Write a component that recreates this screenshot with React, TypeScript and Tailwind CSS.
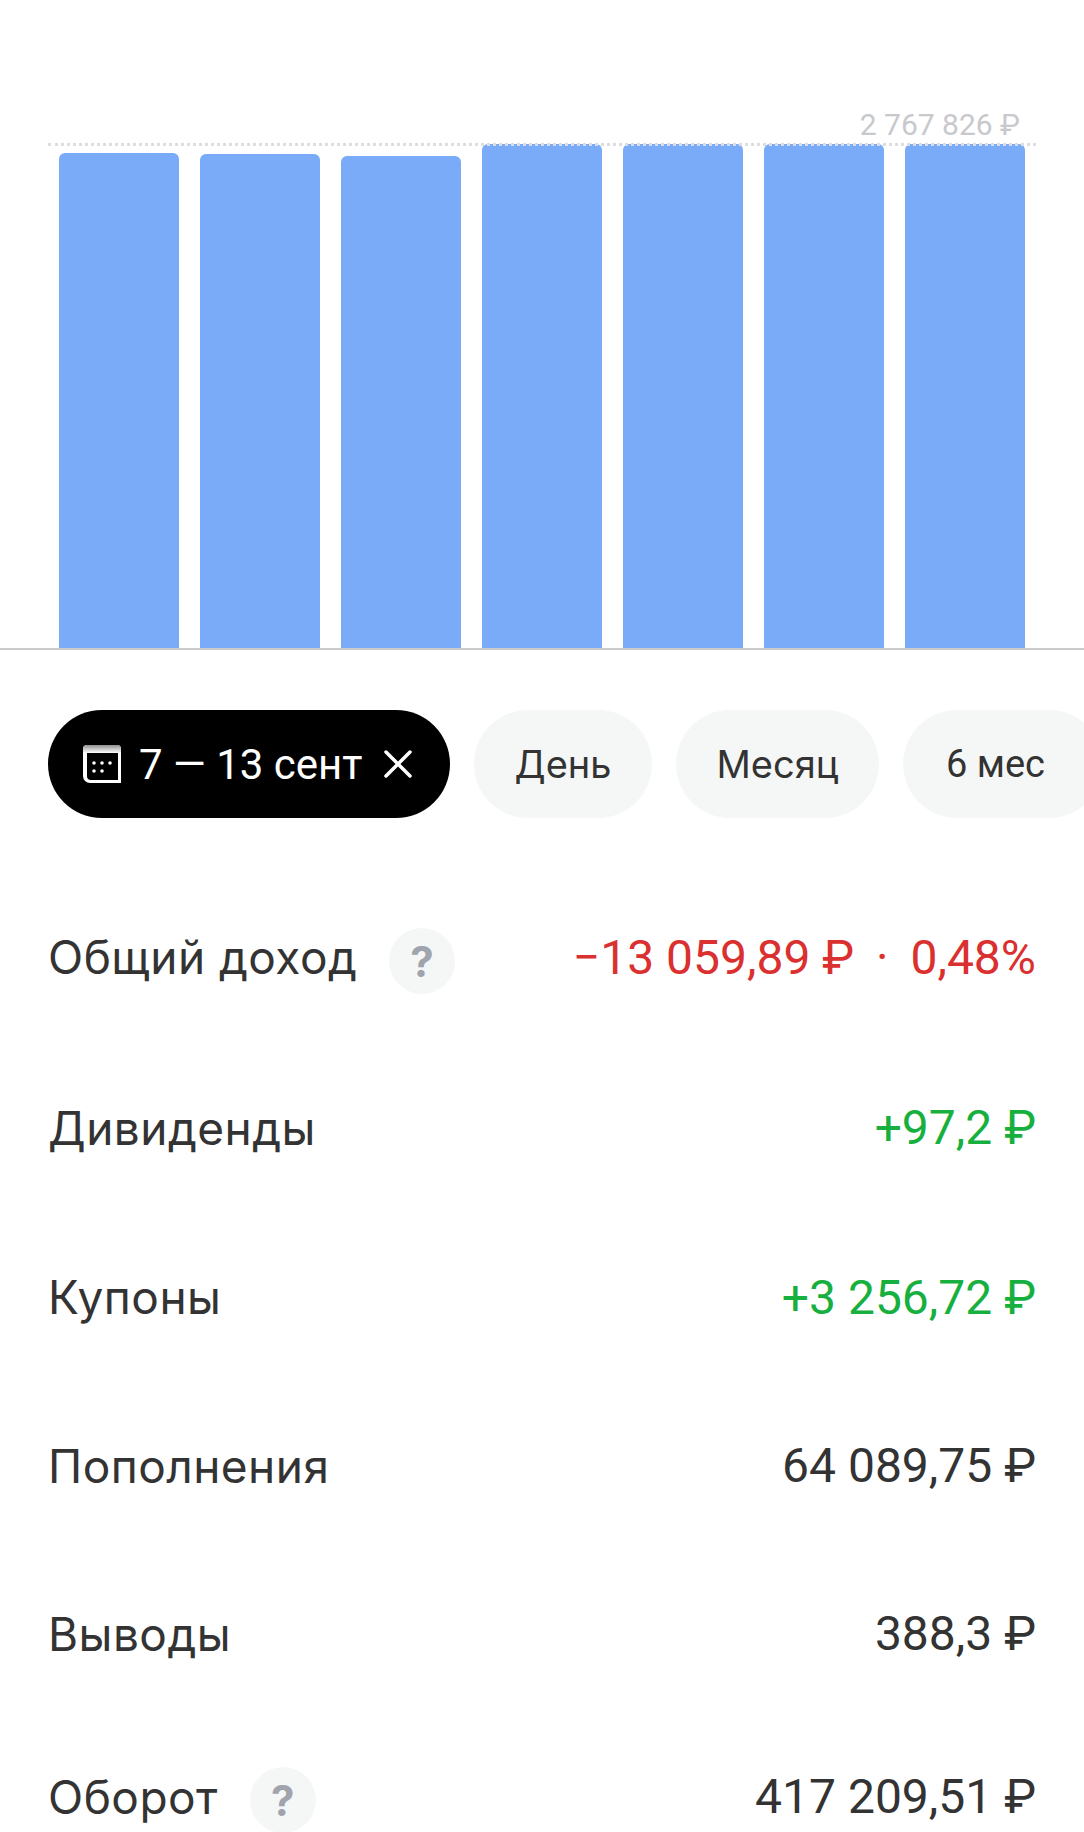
const bars = [495, 494, 492, 504, 504, 504, 504];

const rows = [
  { label: "Дивиденды", value: "+97,2 ₽", color: "text-[#17b03f]", h: "h-[170px]" },
  { label: "Купоны", value: "+3 256,72 ₽", color: "text-[#17b03f]", h: "h-[169px]" },
  { label: "Пополнения", value: "64 089,75 ₽", color: "text-[#333333]", h: "h-[168px]" },
  { label: "Выводы", value: "388,3 ₽", color: "text-[#333333]", h: "h-[168px]" },
];

const HelpBadge = () => (
  <span className="mt-[6px] flex h-[66px] w-[66px] shrink-0 items-center justify-center rounded-full bg-[#f5f7f7] text-[42px] font-bold text-[#a0a4ad]">
    ?
  </span>
);

const CalendarIcon = () => (
  <svg width="40" height="40" viewBox="0 0 40 40" fill="none">
    <defs>
      <linearGradient id="cal" x1="0" y1="0" x2="0" y2="1">
        <stop offset="0" stopColor="#8f8f8f" />
        <stop offset="1" stopColor="#ffffff" />
      </linearGradient>
    </defs>
    <path d="M5 1h30a4 4 0 0 1 4 4v34H8a7 7 0 0 1-7-7V5a4 4 0 0 1 4-4z" fill="#fff" />
    <path d="M1 5a4 4 0 0 1 4-4h30a4 4 0 0 1 4 4v4H1z" fill="url(#cal)" />
    <path d="M5 9h31v27H9a4 4 0 0 1-4-4z" fill="#000" />
    <g fill="#fff">
      <circle cx="12" cy="19" r="1.8" />
      <circle cx="20" cy="19" r="1.8" />
      <circle cx="28" cy="19" r="1.8" />
      <circle cx="12" cy="27" r="1.8" />
      <circle cx="20" cy="27" r="1.8" />
    </g>
  </svg>
);

const CloseIcon = () => (
  <svg width="28" height="28" viewBox="0 0 28 28" fill="none" stroke="#fff" strokeWidth="3.5" strokeLinecap="round">
    <path d="M2 2l24 24M26 2L2 26" />
  </svg>
);

export default function App() {
  return (
    <div className="h-[1832px] w-[1084px] overflow-hidden bg-white font-['Inter','Liberation_Sans',sans-serif] text-[#333333]">
      {/* chart */}
      <div className="relative h-[650px] border-b-2 border-[#cbcbcb]">
        <span className="absolute right-[64px] top-[108px] font-['Roboto',sans-serif] text-[30px] leading-[34px] text-[#c8c9cc]">2 767 826 ₽</span>
        <div className="absolute left-[48px] right-[48px] top-[143px] border-t-[3px] border-dotted border-[#dcdde0]" />
        <div className="flex h-full items-end justify-between pl-[59px] pr-[59px]">
          {bars.map((h, i) => (
            <div key={i} className="w-[120px] rounded-t-[6px] bg-[#7aabf9]" style={{ height: h }} />
          ))}
        </div>
      </div>

      {/* period pills */}
      <div className="mt-[60px] flex h-[108px] items-center gap-[24px] pl-[48px] text-[38px]">
        <div className="flex h-full w-[402px] shrink-0 items-center rounded-full bg-black pl-[34px] text-white">
          <CalendarIcon />
          <span className="ml-[17px] whitespace-nowrap font-['Roboto',sans-serif] text-[42px]">7 — 13 сент</span>
          <span className="ml-[21px]"><CloseIcon /></span>
        </div>
        <div className="flex h-full w-[178px] shrink-0 items-center justify-center rounded-full bg-[#f5f7f7]">День</div>
        <div className="flex h-full w-[203px] shrink-0 items-center justify-center rounded-full bg-[#f5f7f7]">Месяц</div>
        <div className="flex h-full w-[200px] shrink-0 items-center rounded-full bg-[#f5f7f7] pl-[43px] font-['Roboto',sans-serif]">6 мес</div>
      </div>

      {/* totals */}
      <div className="mt-[55px] px-[48px] text-[46px] tracking-[0.01em]">
        <div className="flex h-[170px] items-center justify-between">
          <div className="flex items-center gap-[32px]">
            <span className="-mt-[2px]">Общий доход</span>
            <HelpBadge />
          </div>
          <span className="font-['Roboto',sans-serif] text-[48px] tracking-normal text-[#da3030]">−13 059,89 ₽ <span className="mx-[10px]">·</span> 0,48%</span>
        </div>
        {rows.map((r) => (
          <div key={r.label} className={`flex items-center justify-between ${r.h}`}>
            <span>{r.label}</span>
            <span className={`font-['Roboto',sans-serif] text-[48px] tracking-normal ${r.color}`}>{r.value}</span>
          </div>
        ))}
        <div className="flex h-[158px] items-center justify-between">
          <div className="flex items-center gap-[32px]">
            <span>Оборот</span>
            <HelpBadge />
          </div>
          <span className="font-['Roboto',sans-serif] text-[48px] tracking-normal">417 209,51 ₽</span>
        </div>
      </div>
    </div>
  );
}
